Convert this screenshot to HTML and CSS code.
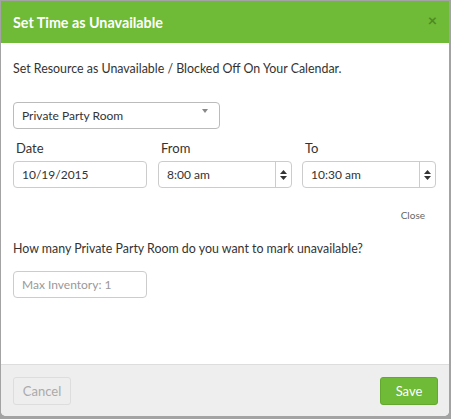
FILE: index.html
```html
<!DOCTYPE html>
<html>
<head>
<meta charset="utf-8">
<link rel="stylesheet" href="styles.css">
</head>
<body>
<div class="modal">
  <div class="modal-header">
    <h3 class="title">Set Time as Unavailable</h3>
    <span class="close-x">&times;</span>
  </div>
  <div class="modal-body">
    <p class="intro">Set Resource as Unavailable / Blocked Off On Your Calendar.</p>
    <div class="select">
      <span>Private Party Room</span>
      <span class="caret"></span>
    </div>
    <div class="row">
      <div class="field">
        <label>Date</label>
        <div class="input">10/19/2015</div>
      </div>
      <div class="field">
        <label>From</label>
        <div class="input spin">
          <span class="val">8:00 am</span>
          <span class="spinner"><svg width="7" height="10" viewBox="0 0 7 10"><path d="M3.5 0L7 4H0z M3.5 10L0 6h7z" fill="#333"/></svg></span>
        </div>
      </div>
      <div class="field to">
        <label>To</label>
        <div class="input spin">
          <span class="val">10:30 am</span>
          <span class="spinner"><svg width="7" height="10" viewBox="0 0 7 10"><path d="M3.5 0L7 4H0z M3.5 10L0 6h7z" fill="#333"/></svg></span>
        </div>
      </div>
    </div>
    <div class="close-row"><span class="close-link">Close</span></div>
    <p class="question">How many Private Party Room do you want to mark unavailable?</p>
    <div class="input placeholder">Max Inventory: 1</div>
  </div>
  <div class="modal-footer">
    <button class="btn btn-cancel">Cancel</button>
    <button class="btn btn-save">Save</button>
  </div>
</div>
</body>
</html>
```
FILE: styles.css
```css
html, body {
  margin: 0;
  padding: 0;
}
body {
  background: #a3a3a3;
  width: 451px;
  height: 419px;
  overflow: hidden;
  font-family: Lato, "Open Sans", sans-serif;
  color: #333;
}
.modal {
  margin: 1px 0 0 1px;
  width: 448px;
  height: 415px;
  background: #fff;
  border-radius: 0 0 5px 5px;
  display: flex;
  flex-direction: column;
  overflow: hidden;
}
.modal-header {
  background: #6fba36;
  height: 42px;
  display: flex;
  align-items: center;
  justify-content: space-between;
  padding: 0 12px 0 12px;
  box-sizing: border-box;
}
.title {
  margin: 0;
  color: #fff;
  font-size: 14.3px;
  font-weight: bold;
  padding-top: 1px;
}
.close-x {
  color: #4e8a23;
  font-size: 16px;
  font-weight: bold;
  margin-top: -6px;
}
.modal-body {
  flex: 1;
  padding: 0 12px;
}
.intro {
  margin: 17px 0 0;
  font-size: 12.4px;
  line-height: 18px;
}
.select {
  margin-top: 24px;
  width: 207px;
  height: 27px;
  box-sizing: border-box;
  border: 1px solid #bbb;
  border-radius: 4px;
  display: flex;
  align-items: center;
  justify-content: space-between;
  padding: 0 8px 0 8px;
  font-size: 12px;
  color: #333;
}
.caret {
  width: 0;
  height: 0;
  border-left: 3px solid transparent;
  border-right: 3px solid transparent;
  border-top: 4px solid #888;
  margin-top: -9px;
  margin-right: 3px;
}
.row {
  display: flex;
  gap: 11px;
  margin-top: 10px;
}
.field {
  display: flex;
  flex-direction: column;
}
.field.to {
  margin-left: -1px;
}
label {
  font-size: 13px;
  line-height: 18px;
  padding-left: 3px;
  margin-bottom: 4px;
}
.input {
  width: 134px;
  height: 27px;
  box-sizing: border-box;
  border: 1px solid #ccc;
  border-radius: 4px;
  font-size: 12px;
  display: flex;
  align-items: center;
  padding-left: 8px;
  color: #333;
}
.spin {
  justify-content: space-between;
  padding-right: 0;
}
.spinner {
  width: 15px;
  height: 25px;
  border-left: 1px solid #ccc;
  display: flex;
  align-items: center;
  justify-content: center;
}
.close-row {
  display: flex;
  justify-content: flex-end;
  margin-top: 21px;
  padding-right: 12px;
}
.close-link {
  font-size: 10px;
  color: #666;
}
.question {
  margin: 19px 0 13px;
  font-size: 12.4px;
  line-height: 18px;
}
.placeholder {
  color: #999;
}
.modal-footer {
  background: #eee;
  border-top: 1px solid #ddd;
  height: 52px;
  box-sizing: border-box;
  display: flex;
  justify-content: space-between;
  align-items: center;
  padding: 0 11px 0 12px;
}
.btn {
  font-family: inherit;
  font-size: 13px;
  height: 28px;
  width: 58px;
  border-radius: 3px;
  padding: 0;
}
.btn-cancel {
  background: #eee;
  border: 1px solid #ddd;
  color: #aaa;
}
.btn-save {
  background: #6fba36;
  border: 1px solid #63a92f;
  color: #fff;
}
```
